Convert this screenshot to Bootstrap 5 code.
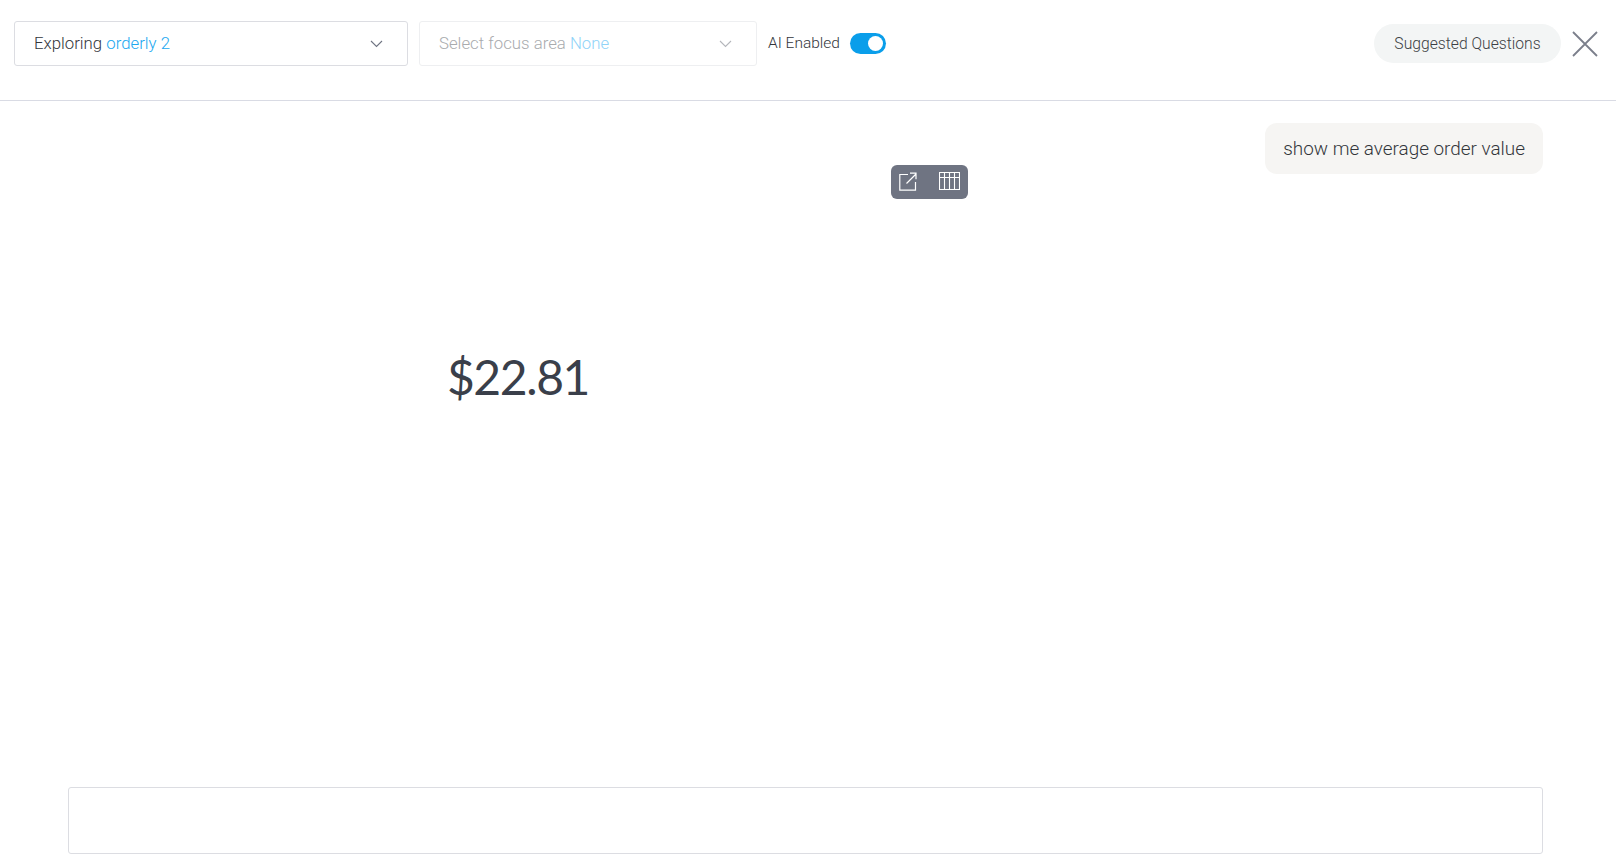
<!DOCTYPE html>
<html lang="en">
<head>
  <meta charset="UTF-8" />
  <meta name="viewport" content="width=device-width, initial-scale=1.0"/>
  <title>Explore</title>
  <link href="https://cdn.jsdelivr.net/npm/bootstrap@5.3.0/dist/css/bootstrap.min.css" rel="stylesheet" />
  <style>
    html, body {
      height: 100%;
    }
    body {
      font-family: Roboto, "Liberation Sans", sans-serif;
      font-weight: 300;
      color: #33363b;
      background-color: #fff;
      overflow: hidden;
    }
    .top-bar {
      height: 101px;
      padding: 0 18px 13px 14px;
      border-bottom: 1px solid #d9dbe4;
    }
    .picker {
      height: 45px;
      padding: 0 24px 0 19px;
      font-size: 16.8px;
      background: #fff;
      border: 1px solid #dcdde2;
      border-radius: 3px;
    }
    .picker-model {
      width: 394px;
    }
    .picker-focus {
      width: 338px;
      margin-left: 11px;
      color: #a9abae;
      border-color: #eeeff1;
    }
    .accent {
      color: #1ba8f0;
    }
    .picker-focus .accent {
      color: #8fd3f8;
    }
    .ai-label {
      margin-left: 11px;
      font-size: 15.5px;
      color: #33363b;
    }
    .ai-switch {
      width: 36px;
      height: 21px;
      margin-left: 10.5px;
      padding: 0 3px;
      background: #0a9eea;
      border-radius: 11px;
    }
    .ai-knob {
      width: 15px;
      height: 15px;
      background: #fff;
      border-radius: 50%;
    }
    .suggest-btn {
      width: 187px;
      height: 39px;
      font-size: 15.7px;
      color: #3c3f44;
      background: #f3f5f5;
      border-radius: 20px;
    }
    .close-btn {
      margin-left: 11px;
      line-height: 0;
    }
    .chat-area {
      padding: 22px 73px 0 68px;
    }
    .user-bubble {
      height: 51px;
      padding: 1px 18px 0;
      font-size: 18.9px;
      color: #33363b;
      background: #f6f5f3;
      border-radius: 12px;
    }
    .result-box {
      width: 900px;
      height: 426px;
      margin-top: -9px;
    }
    .result-tools {
      top: 0;
      right: 0;
      width: 77px;
      height: 34px;
      padding: 0 8px 2px 8px;
      background: #6f7482;
      border-radius: 6px;
    }
    .big-value {
      font-family: Lato, "Liberation Sans", sans-serif;
      font-size: 48px;
      font-weight: 400;
      letter-spacing: -1.4px;
      color: #3a3f4a;
      margin-bottom: 3px;
    }
    .ask-box {
      height: 67px;
      margin: 0 73px 9px 68px;
      border: 1px solid #dcdde2;
      border-radius: 3px;
    }
  </style>
</head>
<body class="d-flex flex-column">

  <!-- Top bar -->
  <div class="top-bar d-flex align-items-center">
    <div class="picker picker-model d-flex align-items-center justify-content-between">
      <span>Exploring <span class="accent">orderly 2</span></span>
      <svg width="13" height="8" viewBox="0 0 13 8" fill="none" stroke="#6f7482" stroke-width="1.1"><path d="M1 1l5.5 5.5L12 1"/></svg>
    </div>
    <div class="picker picker-focus d-flex align-items-center justify-content-between">
      <span>Select focus area <span class="accent">None</span></span>
      <svg width="13" height="8" viewBox="0 0 13 8" fill="none" stroke="#b4b6bb" stroke-width="1.1"><path d="M1 1l5.5 5.5L12 1"/></svg>
    </div>
    <span class="ai-label">AI Enabled</span>
    <div class="ai-switch d-flex align-items-center justify-content-end"><div class="ai-knob"></div></div>
    <div class="suggest-btn d-flex align-items-center justify-content-center ms-auto">Suggested Questions</div>
    <div class="close-btn">
      <svg width="26" height="26" viewBox="0 0 26 26" fill="none" stroke="#7b7f8b" stroke-width="1.8"><path d="M1 1l24 24M25 1L1 25"/></svg>
    </div>
  </div>

  <!-- Conversation -->
  <div class="chat-area flex-grow-1">
    <div class="d-flex justify-content-end">
      <div class="user-bubble d-flex align-items-center">show me average order value</div>
    </div>
    <div class="result-box position-relative d-flex align-items-center justify-content-center">
      <span class="big-value">$22.81</span>
      <div class="result-tools position-absolute d-flex align-items-center justify-content-between">
        <svg width="18" height="19" viewBox="0 0 18 19" fill="none" stroke="#fff" stroke-width="1.2"><path d="M9 2.5H.8v15.7h15.7V10M7.5 11.5L17 2M11 1.2h6v6"/></svg>
        <svg width="21" height="18" viewBox="0 0 21 18" fill="none" stroke="#fff" stroke-width="1.1"><path d="M.5.5h20v17H.5zM.5 5.5h20M5.5.5v17M10.5.5v17M15.5.5v17"/></svg>
      </div>
    </div>
  </div>

  <!-- Question input -->
  <div class="ask-box"></div>

  <script src="https://cdn.jsdelivr.net/npm/bootstrap@5.3.0/dist/js/bootstrap.bundle.min.js"></script>
</body>
</html>
